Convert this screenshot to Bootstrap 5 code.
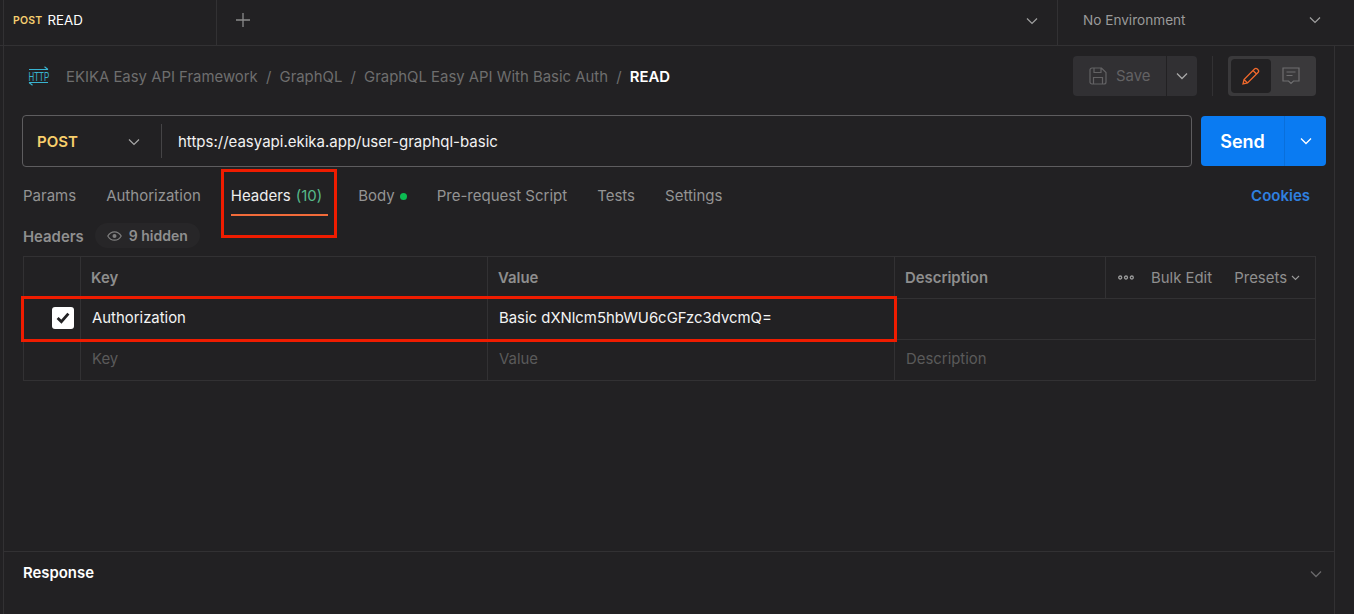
<!DOCTYPE html>
<html lang="en">
<head>
<meta charset="utf-8">
<title>READ</title>
<link href="https://cdn.jsdelivr.net/npm/bootstrap@5.3.0/dist/css/bootstrap.min.css" rel="stylesheet">
<style>
:root{--pg:#222123;--ln:#323133;--ln2:#3a393b}
html,body{height:100%;overflow:hidden}
body{background:var(--pg);color:#fff;font-family:Inter,"Liberation Sans",sans-serif;font-size:14.9px}
svg{display:block;flex:none}
.shell{width:1354px;height:614px;position:relative}
.topstrip{height:46px;border-bottom:1px solid var(--ln);padding-left:3px}
.reqtab{width:214px;border-right:1px solid var(--ln);padding-left:9px;gap:5px;border-left:1px solid var(--ln);height:45px;padding-bottom:3px}
.meth-sm{font-size:10.5px;font-weight:600;color:#f5ce6f;letter-spacing:.2px}
.reqname{font-size:13.3px;color:#fff}
.addtab{padding-left:18px;padding-bottom:5px}
.tabchev{padding-right:19px;padding-bottom:4px}
.envbox{width:297px;height:45px;border-left:1px solid var(--ln);padding:0 33px 5px 25px;color:#9a9a9a;font-size:13.6px}
.bodyrow{height:568px}
.railleft{width:4px;border-right:1px solid var(--ln)}
.railright{width:20px;border-left:1px solid var(--ln)}
.work{width:1330px;position:relative}
.crumbrow{height:69px;padding:0 18px 10px 24px}
.crumbs{color:#6e6e6e;gap:8.2px;margin-left:16px;padding-top:3px;font-size:14.9px}
.crumbs b{color:#fff;font-weight:600}
.savebtn{width:93px;height:40px;background:#313033;border-radius:4px 0 0 4px;color:#636264;gap:9px;padding-left:16px;margin-right:1px}
.savelabel{padding-top:2px}
.savedrop{width:30px;height:40px;background:#313033;border-radius:0 4px 4px 0}
.vsep{width:1px;height:40px;background:var(--ln);margin:0 15px}
.modes{width:88px;height:40px;background:#3a393b;border-radius:4px;padding:3px}
.modeon{width:40px;height:34px;background:#222123;border-radius:4px}
.modeoff{width:40px;height:34px}
.urlrow{padding:0 8px 0 18px;gap:9px;height:52px}
.urlbox{width:1170px;height:52px;border:1px solid #5e5d5f;border-radius:4px;font-size:15px}
.methbox{width:139px;height:34px;border-right:1px solid #454446;padding:2px 21px 0 14px;color:#f8cf6c;font-weight:600}
.urltext{padding:2px 0 0 16px;color:#f2f2f2}
.sendbtn{width:125px;height:50px;background:#0a7bf2;border-radius:4px;overflow:hidden}
.sendtxt{width:84px;font-size:18px;font-weight:600;border-right:1px solid #096fdb;height:100%}
.sendarr{width:41px;height:100%}
.tabsrow{height:54px;padding:9px 24px 0 19px;gap:30px;color:#949494;font-size:15px}
.tabsitem{height:45px;position:relative;padding-bottom:4px}
.tabson{color:#eee;gap:5px;padding-right:6px}
.tabson::after{content:"";position:absolute;left:0;right:0;bottom:5px;height:2px;background:#f26b3a}
.countg{color:#57b98a}
.dotg{width:7px;height:7px;background:#0cbb52;border-radius:50%;margin-left:5px}
.cookielink{color:#2f80e0;font-weight:600;text-decoration:none;padding-bottom:4px}
.hdrrow{height:32px;padding-left:19px;color:#909090;font-weight:600}
.hiddenpill{margin:0 0 3px 11px;height:25px;background:#272628;border-radius:13px;padding:0 12px;gap:7px;color:#8f8f8f;font-weight:600;font-size:14px}
.tblwrap{margin:3px 0 0 19px;width:1293px}
.hgrid{table-layout:fixed;width:1292px;--bs-table-bg:transparent;--bs-table-color:#fff;--bs-border-color:var(--ln);font-size:14.9px}
.hgrid td,.hgrid th{padding:0 10px 2px;vertical-align:middle;height:41px;border-color:var(--ln)}
.hgrid th{height:42px;color:#8e8e8e;font-weight:600;padding:1px 10px 0}
.colchk{width:57px}.colkey{width:407px}.colval{width:407px}.coldesc{width:211px}.colact{width:210px}
.hgrid td.keyc{padding-left:11px;color:#f4f4f4}
.hgrid td.valc{padding-left:11px;color:#f4f4f4}
.hgrid td.ph{color:#5a5a5a;padding-left:11px}
.hgrid th.acts{color:#8f8f8f;font-weight:400;padding-left:12px;padding-right:15px}
.bulkgap{margin-left:17px}
.chkon{width:22px;height:22px;background:#fff;border-radius:3px;margin-left:18px}
.resprow{position:absolute;left:0;right:0;top:505px;height:63px;border-top:1px solid var(--ln);padding:0 12px 19px 19px;font-weight:600}
.redmark{position:absolute;border:3px solid #ef1c00;pointer-events:none}
.mark1{left:217px;top:123px;width:116px;height:69px}
.mark2{left:17px;top:250px;width:876px;height:46px}
</style>
</head>
<body>
<div class="shell">
  <div class="topstrip d-flex align-items-center">
    <div class="reqtab d-flex align-items-center"><span class="meth-sm">POST</span><span class="reqname">READ</span></div>
    <div class="addtab"><svg width="16" height="16" viewBox="0 0 16 16"><path d="M8 1v14M1 8h14" stroke="#8a8a8a" stroke-width="1.3"/></svg></div>
    <div class="tabchev ms-auto"><svg width="12" height="8" viewBox="0 0 12 8"><path d="M1 1.5l5 5 5-5" fill="none" stroke="#a0a0a0" stroke-width="1.2"/></svg></div>
    <div class="envbox d-flex align-items-center justify-content-between"><span>No Environment</span><svg width="12" height="8" viewBox="0 0 12 8"><path d="M1 1.5l5 5 5-5" fill="none" stroke="#a0a0a0" stroke-width="1.2"/></svg></div>
  </div>
  <div class="bodyrow d-flex">
    <div class="railleft"></div>
    <div class="work">
      <div class="crumbrow d-flex align-items-center">
        <svg width="22" height="20" viewBox="0 0 22 20"><path d="M1 3.5h19M16.500 .8L20 3.500M1 16.500h19M1 16.500l3.500 2.700" fill="none" stroke="#39b4d1" stroke-width="1.100"/><text transform="translate(0.5 14.500) scale(.66 1)" font-family="'Liberation Sans',sans-serif" font-size="12" fill="#39b4d1">HTTP</text></svg>
        <div class="crumbs d-flex align-items-center"><span>EKIKA Easy API Framework</span><span>/</span><span>GraphQL</span><span>/</span><span>GraphQL Easy API With Basic Auth</span><span>/</span><b>READ</b></div>
        <div class="ms-auto d-flex align-items-center">
          <div class="savebtn d-flex align-items-center"><svg width="18" height="18" viewBox="0 0 18 18"><path d="M1 3a2 2 0 012-2h9.500L17 5.500V15a2 2 0 01-2 2H3a2 2 0 01-2-2zM5 1v4.500h7V1M4.500 17v-6.500h9V17" fill="none" stroke="#636264" stroke-width="1.200"/></svg><span class="savelabel">Save</span></div>
          <div class="savedrop d-flex align-items-center justify-content-center"><svg width="12" height="8" viewBox="0 0 12 8"><path d="M1 1.500l5 5 5-5" fill="none" stroke="#a8a8a8" stroke-width="1.300"/></svg></div>
          <div class="vsep"></div>
          <div class="modes d-flex">
            <div class="modeon d-flex align-items-center justify-content-center"><svg width="18" height="18" viewBox="0 0 18 18"><path d="M1 17l1-4.500L12.500 2a2 2 0 012.800 0l.7.700a2 2 0 010 2.800L5.500 16zM2 12.500L5.500 16M11 3.500l3.500 3.500" fill="none" stroke="#f0692c" stroke-width="1.300"/></svg></div>
            <div class="modeoff d-flex align-items-center justify-content-center"><svg width="18" height="18" viewBox="0 0 18 18"><path d="M1 1h16v13h-5.500L9 16.500 6.500 14H1zM4.500 5h9M4.500 8.500h6" fill="none" stroke="#6f6e70" stroke-width="1.200"/></svg></div>
          </div>
        </div>
      </div>
      <div class="urlrow d-flex align-items-center">
        <div class="urlbox d-flex align-items-center">
          <div class="methbox d-flex align-items-center justify-content-between"><span>POST</span><svg width="12" height="8" viewBox="0 0 12 8"><path d="M1 1.500l5 5 5-5" fill="none" stroke="#a8a8a8" stroke-width="1.200"/></svg></div>
          <div class="urltext">https://easyapi.ekika.app/user-graphql-basic</div>
        </div>
        <div class="sendbtn d-flex align-items-center">
          <div class="sendtxt d-flex align-items-center justify-content-center">Send</div>
          <div class="sendarr d-flex align-items-center justify-content-center"><svg width="12" height="8" viewBox="0 0 12 8"><path d="M1 1.500l5 5 5-5" fill="none" stroke="#fff" stroke-width="1.300"/></svg></div>
        </div>
      </div>
      <div class="tabsrow d-flex align-items-center">
        <div class="tabsitem d-flex align-items-center">Params</div>
        <div class="tabsitem d-flex align-items-center">Authorization</div>
        <div class="tabsitem tabson d-flex align-items-center"><span>Headers</span><span class="countg">(10)</span></div>
        <div class="tabsitem d-flex align-items-center">Body<span class="dotg"></span></div>
        <div class="tabsitem d-flex align-items-center">Pre-request Script</div>
        <div class="tabsitem d-flex align-items-center">Tests</div>
        <div class="tabsitem d-flex align-items-center">Settings</div>
        <a class="cookielink ms-auto" href="#">Cookies</a>
      </div>
      <div class="hdrrow d-flex align-items-center">
        <span>Headers</span>
        <span class="hiddenpill d-flex align-items-center"><svg width="15" height="10" viewBox="0 0 15 10"><path d="M.8 5C2.500 2 4.800.8 7.500.8S12.500 2 14.200 5C12.500 8 10.200 9.200 7.500 9.200S2.500 8 .8 5z" fill="none" stroke="#7f7f7f" stroke-width="1.200"/><circle cx="7.500" cy="5" r="2" fill="#7f7f7f"/></svg>9 hidden</span>
      </div>
      <div class="tblwrap">
        <table class="table table-bordered hgrid mb-0">
          <colgroup><col class="colchk"><col class="colkey"><col class="colval"><col class="coldesc"><col class="colact"></colgroup>
          <thead>
            <tr><th></th><th>Key</th><th>Value</th><th>Description</th>
              <th class="acts"><div class="d-flex align-items-center"><svg width="16" height="5" viewBox="0 0 16 5"><g fill="none" stroke="#9a9a9a" stroke-width="1.300"><circle cx="2.200" cy="2.500" r="1.500"/><circle cx="8" cy="2.500" r="1.500"/><circle cx="13.800" cy="2.500" r="1.500"/></g></svg><span class="bulkgap">Bulk Edit</span><span class="ms-auto">Presets</span><svg class="ms-1" width="9" height="6" viewBox="0 0 9 6"><path d="M1 1l3.500 3.500L8 1" fill="none" stroke="#9a9a9a" stroke-width="1.100"/></svg></div></th></tr>
          </thead>
          <tbody>
            <tr><td><div class="chkon d-flex align-items-center justify-content-center"><svg width="14" height="12" viewBox="0 0 13 11"><path d="M1.500 5.500l3.500 3.500 6.500-7.500" fill="none" stroke="#222123" stroke-width="2.600"/></svg></div></td><td class="keyc">Authorization</td><td class="valc">Basic dXNlcm5hbWU6cGFzc3dvcmQ=</td><td colspan="2"></td></tr>
            <tr><td></td><td class="ph">Key</td><td class="ph">Value</td><td class="ph" colspan="2">Description</td></tr>
          </tbody>
        </table>
      </div>
      <div class="resprow d-flex align-items-center justify-content-between"><span>Response</span><svg width="12" height="8" viewBox="0 0 12 8"><path d="M1 1.500l5 5 5-5" fill="none" stroke="#6a696b" stroke-width="1.300"/></svg></div>
      <div class="redmark mark1"></div>
      <div class="redmark mark2"></div>
    </div>
    <div class="railright"></div>
  </div>
</div>
<script src="https://cdn.jsdelivr.net/npm/bootstrap@5.3.0/dist/js/bootstrap.bundle.min.js"></script>
</body>
</html>
